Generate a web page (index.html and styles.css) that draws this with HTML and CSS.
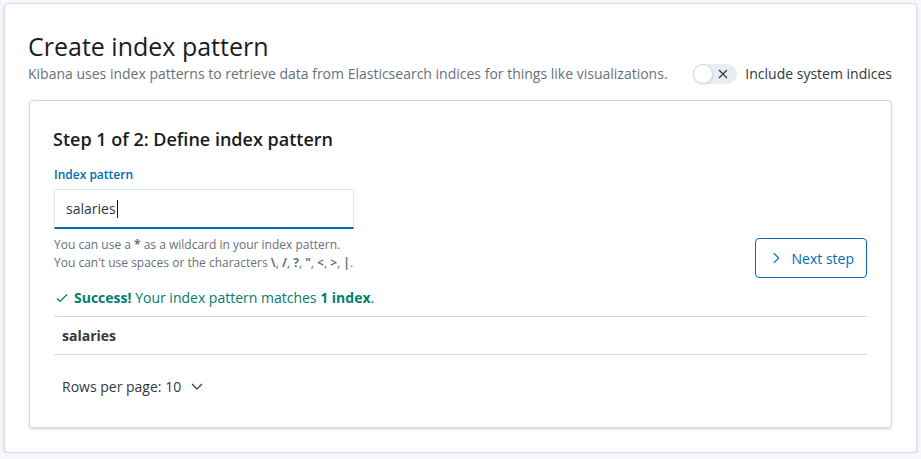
FILE: index.html
```html
<!DOCTYPE html>
<html lang="en">
<head>
<meta charset="utf-8">
<title>Create index pattern</title>
<link rel="stylesheet" href="styles.css">
</head>
<body>
<div class="page">
  <div class="panel outer">
    <h1 class="title">Create index pattern</h1>
    <div class="subrow">
      <p class="subtitle">Kibana uses index patterns to retrieve data from Elasticsearch indices for things like visualizations.</p>
      <label class="switch">
        <span class="track">
          <span class="knob"></span>
          <svg class="xicon" width="16" height="16" viewBox="0 0 16 16"><path d="M4 4l8 8M12 4l-8 8" stroke="#343741" stroke-width="1.2" fill="none"/></svg>
        </span>
        <span class="switch-label">Include system indices</span>
      </label>
    </div>

    <div class="panel inner">
      <h2 class="step">Step 1 of 2: Define index pattern</h2>
      <div class="formrow">
        <div class="field">
          <div class="label">Index pattern</div>
          <div class="input"><span>salaries</span><span class="caret"></span></div>
          <div class="help">
            <div>You can use a <b>*</b> as a wildcard in your index pattern.</div>
            <div>You can't use spaces or the characters <b>\</b>, <b>/</b>, <b>?</b>, <b>"</b>, <b>&lt;</b>, <b>&gt;</b>, <b>|</b>.</div>
          </div>
        </div>
        <button class="next">
          <svg width="16" height="16" viewBox="0 0 16 16"><path d="M6 3l5 5-5 5" stroke="#006bb4" stroke-width="1.2" fill="none"/></svg>
          <span>Next step</span>
        </button>
      </div>
      <div class="success">
        <svg width="16" height="16" viewBox="0 0 16 16"><path d="M3 8.5l3 3 7-7" stroke="#017d73" stroke-width="1.2" fill="none"/></svg>
        <span><b>Success!</b> Your index pattern matches <b>1 index</b>.</span>
      </div>
      <div class="table">
        <div class="row">salaries</div>
      </div>
      <button class="rows">
        <span>Rows per page: 10</span>
        <svg width="16" height="16" viewBox="0 0 16 16"><path d="M3 6l5 5 5-5" stroke="#343741" stroke-width="1.2" fill="none"/></svg>
      </button>
    </div>
  </div>
</div>
</body>
</html>
```

FILE: styles.css
```css
html, body {
  margin: 0;
  padding: 0;
  background: #f5f7fa;
}
body {
  font-family: "Open Sans", "Noto Sans", sans-serif;
  color: #343741;
}
.page {
  padding: 3px 4px 0 4px;
}
.panel {
  background: #fff;
  border: 1px solid #d3dae6;
  border-radius: 4px;
  box-shadow: 0 1px 2px rgba(152,162,179,0.25), 0 2px 3px rgba(152,162,179,0.15);
}
.outer {
  padding: 24px;
}
.title {
  margin: 0 0 0 -1px;
  font-size: 25px;
  line-height: 36px;
  font-weight: 400;
  color: #1a1c21;
}
.subrow {
  display: flex;
  justify-content: space-between;
  align-items: center;
  height: 20px;
}
.subtitle {
  margin: 0 0 0 -1px;
  font-size: 14px;
  line-height: 20px;
  color: #69707d;
}
.switch {
  display: flex;
  align-items: center;
}
.track {
  position: relative;
  width: 44px;
  height: 20px;
  border-radius: 10px;
  background: #e9edf3;
  display: flex;
  align-items: center;
  justify-content: flex-end;
  padding-right: 6px;
  box-sizing: border-box;
}
.knob {
  position: absolute;
  left: 0;
  top: 0;
  width: 18px;
  height: 18px;
  border-radius: 50%;
  background: #fff;
  border: 1px solid #d3dae6;
  box-shadow: 0 1px 2px rgba(0,0,0,0.1);
}
.switch-label {
  margin-left: 8px;
  font-size: 14px;
  line-height: 20px;
  color: #343741;
}
.inner {
  margin-top: 16px;
  padding: 24px 24px 25px 24px;
}
.step {
  margin: 0 0 0 -1px;
  font-size: 18px;
  line-height: 28px;
  font-weight: 600;
  color: #1a1c21;
}
.formrow {
  display: flex;
  justify-content: space-between;
  align-items: flex-end;
  margin-top: 13px;
}
.label {
  font-size: 12px;
  line-height: 18px;
  font-weight: 600;
  color: #006bb4;
}
.input {
  margin-top: 5px;
  width: 300px;
  height: 40px;
  box-sizing: border-box;
  border: 1px solid #dfe5ef;
  border-bottom: 2px solid #006bb4;
  padding: 0 11px;
  display: flex;
  align-items: center;
  font-size: 14px;
  color: #343741;
  box-shadow: 0 1px 2px rgba(0,0,0,0.05);
}
.caret {
  display: inline-block;
  width: 1px;
  height: 18px;
  background: #1a1c21;
  margin-left: 1px;
}
.help {
  margin-top: 7px;
  font-size: 12px;
  line-height: 18px;
  color: #69707d;
}
.help b {
  font-weight: 700;
}
.next {
  margin-bottom: -6px;
  height: 40px;
  width: 112px;
  white-space: nowrap;
  border: 1px solid #006bb4;
  border-radius: 4px;
  background: #fff;
  color: #006bb4;
  font-family: inherit;
  font-size: 14px;
  display: flex;
  align-items: center;
  justify-content: center;
  gap: 8px;
  padding: 0 12px;
}
.success {
  margin-top: 16px;
  display: flex;
  align-items: center;
  gap: 4px;
  font-size: 14px;
  line-height: 20px;
  color: #017d73;
}
.success b {
  font-weight: 700;
}
.table {
  margin-top: 8px;
  border-top: 1px solid #d3dae6;
  border-bottom: 1px solid #d3dae6;
}
.row {
  height: 37px;
  display: flex;
  align-items: center;
  padding-left: 8px;
  font-size: 14px;
  font-weight: 700;
  color: #343741;
}
.rows {
  margin-top: 15px;
  height: 32px;
  border: none;
  background: none;
  padding: 0 8px;
  font-family: inherit;
  font-size: 14px;
  color: #343741;
  display: flex;
  align-items: center;
  gap: 8px;
}
```
